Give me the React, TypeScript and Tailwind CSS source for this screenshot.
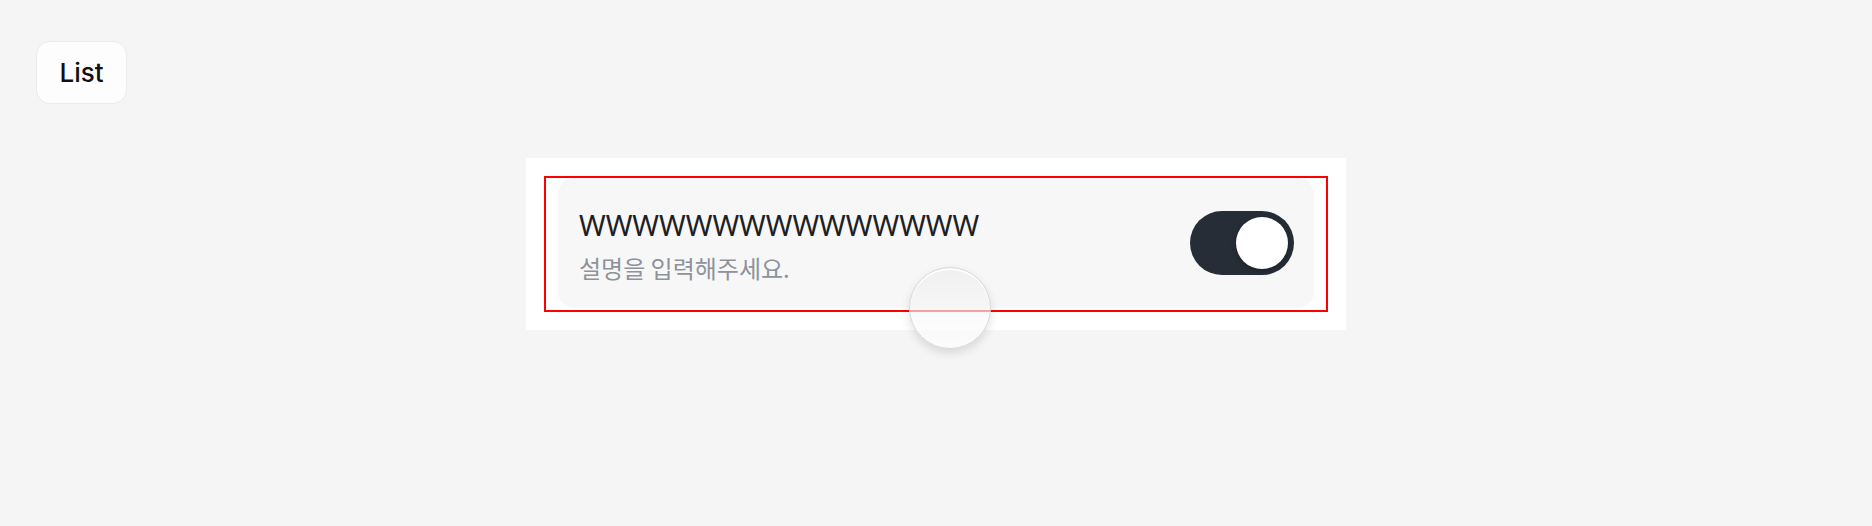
import { useState } from "react";

const App = () => {
  const [on, setOn] = useState(true);

  return (
    <div
      className="relative h-[526px] w-full bg-[#f5f5f5]"
      style={{ fontFamily: "Inter, 'Noto Sans CJK KR', sans-serif" }}
    >
      <div className="pl-[36px] pt-[41px]">
        <button className="flex h-[63px] w-[91px] items-center justify-center rounded-[14px] border border-[#ebebeb] bg-[#fdfdfd] text-[26px] font-medium text-[#111]">
          List
        </button>
      </div>

      <div className="relative mx-auto mt-[54px] w-[820px] bg-white p-[18px]">
        <div className="border-2 border-[#ff0000] px-3 pb-0.5">
          <div className="flex h-[130px] items-center justify-between rounded-2xl bg-[#f7f7f7] pl-[21px] pr-[20px]">
            <div className="flex flex-col gap-[10px] pt-[6px]">
              <span
                className="text-[28.7px] leading-[34px] text-[#1e2024]"
                style={{ fontFamily: "'Noto Sans', sans-serif" }}
              >
                WWWWWWWWWWWWWWW
              </span>
              <span
                className="text-[24px] leading-[32px] text-[#8e929b]"
                style={{ fontFamily: "'Noto Sans CJK KR', sans-serif" }}
              >
                설명을 입력해주세요.
              </span>
            </div>
            <button
              onClick={() => setOn(!on)}
              className="flex h-[64px] w-[104px] items-center justify-end rounded-full bg-[#272d36] pr-[6px]"
            >
              <span className="h-[52px] w-[52px] rounded-full bg-white shadow-[0_2px_6px_rgba(0,0,0,0.25)]" />
            </button>
          </div>
        </div>

        {/* touch indicator */}
        <div className="absolute left-[383px] top-[109px] h-[82px] w-[82px] rounded-full border border-[#d8d8d8] bg-gradient-to-b from-[#ebebeb]/60 to-white/70 shadow-[0_4px_10px_rgba(0,0,0,0.12),inset_0_2px_0_rgba(255,255,255,0.9)]" />
      </div>
    </div>
  );
};

export default App;
